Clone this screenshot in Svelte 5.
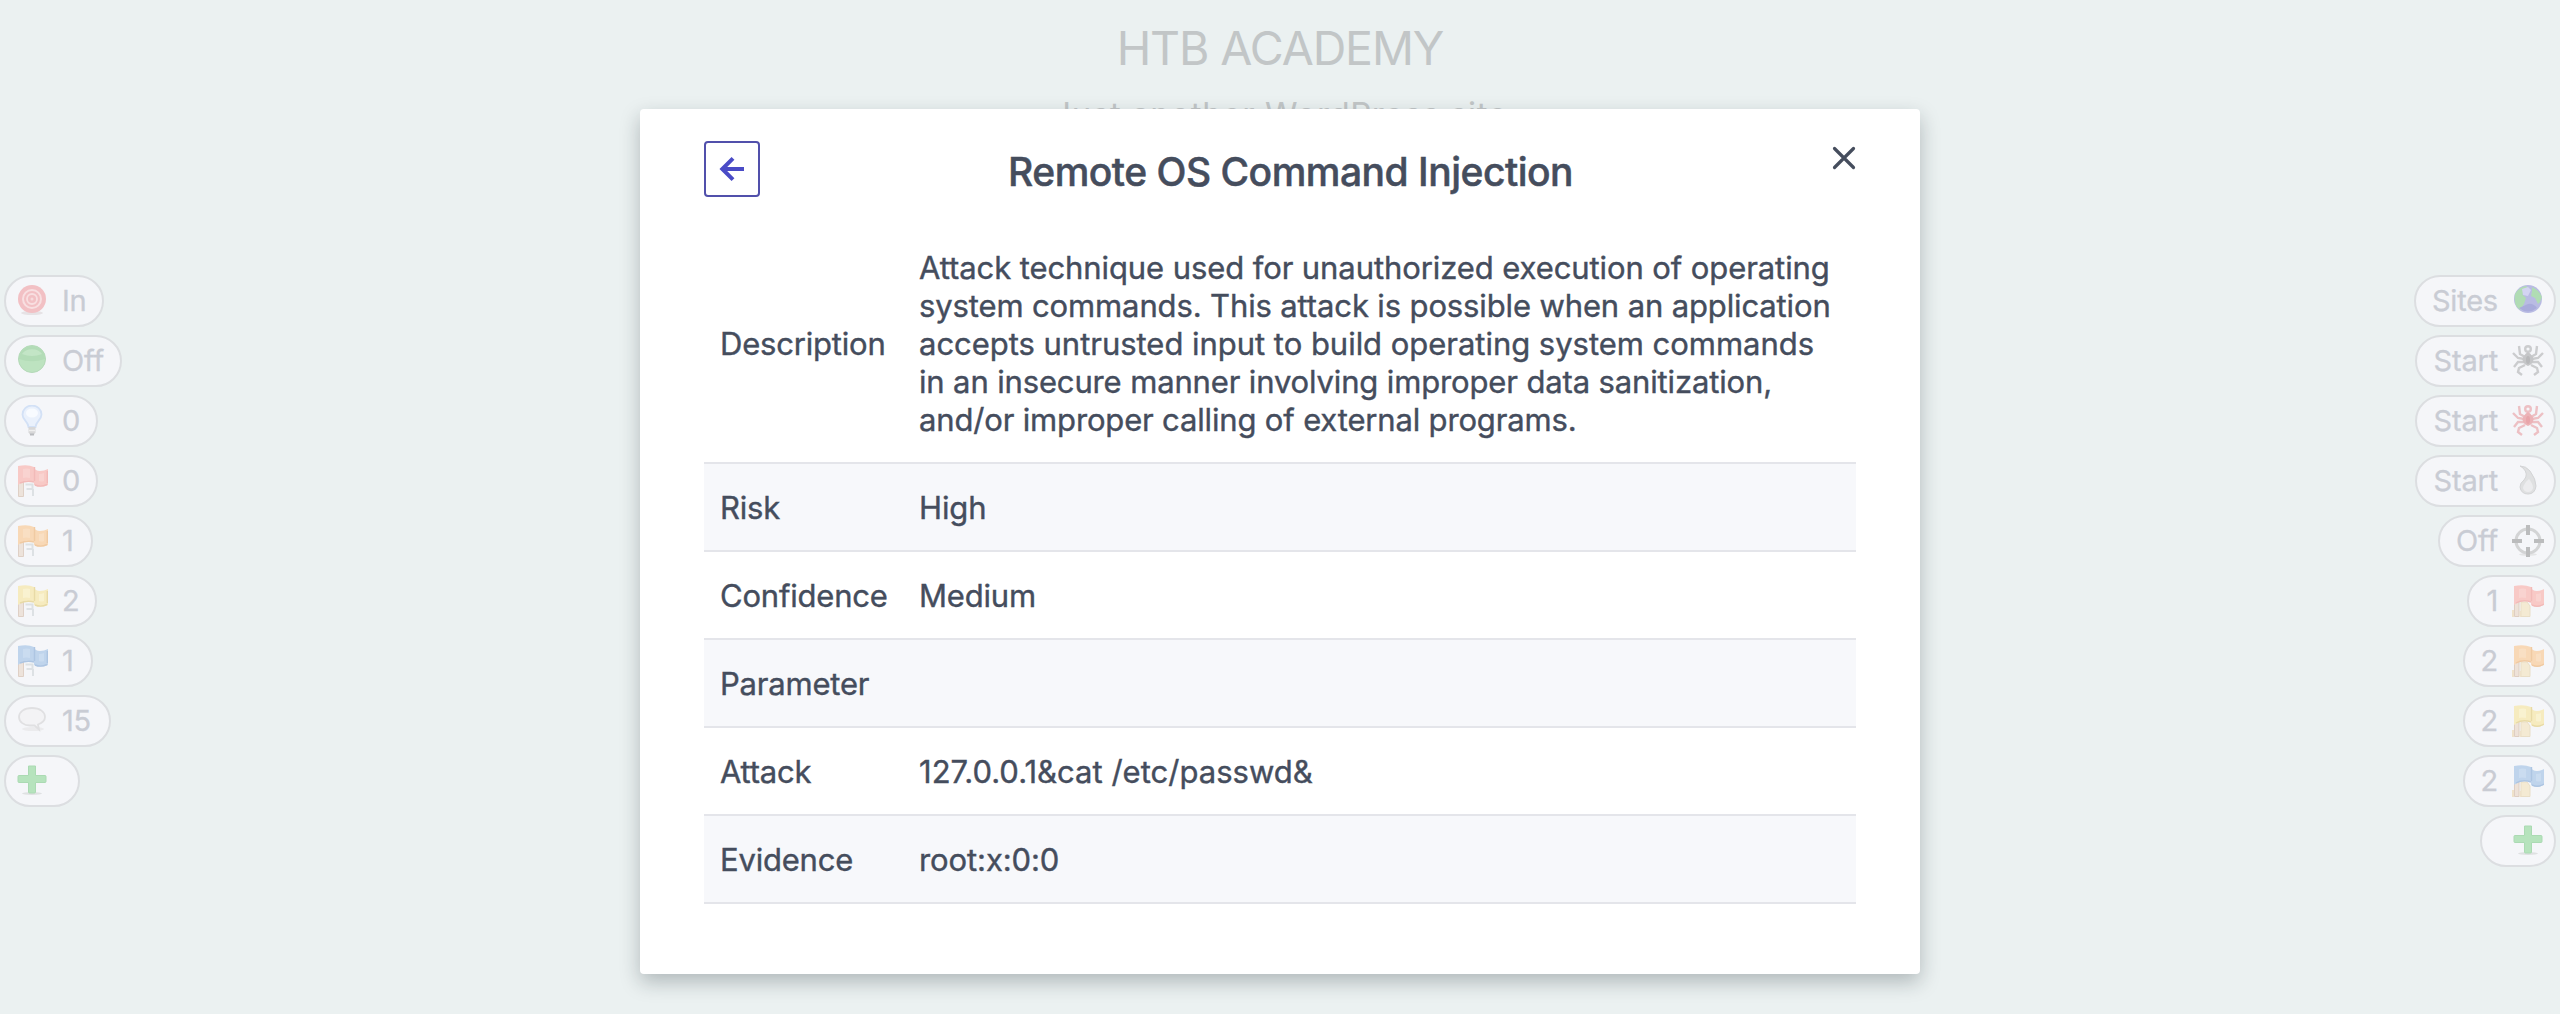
<script>
  const leftTools = [
    { icon: 'target', label: 'In', width: 100 },
    { icon: 'ball', label: 'Off', width: 118 },
    { icon: 'bulb', label: '0', width: 94 },
    { icon: 'flag', color: 'red', label: '0', width: 94 },
    { icon: 'flag', color: 'orange', label: '1', width: 89 },
    { icon: 'flag', color: 'yellow', label: '2', width: 93 },
    { icon: 'flag', color: 'blue', label: '1', width: 89 },
    { icon: 'bubble', label: '15', width: 107 },
    { icon: 'plus', label: '', width: 76 }
  ];

  const rightTools = [
    { icon: 'globe', label: 'Sites', width: 142 },
    { icon: 'spider', color: 'gray', label: 'Start', width: 141 },
    { icon: 'spider', color: 'red', label: 'Start', width: 141 },
    { icon: 'flame', label: 'Start', width: 141 },
    { icon: 'aim', label: 'Off', width: 118 },
    { icon: 'pageflag', color: 'red', label: '1', width: 89 },
    { icon: 'pageflag', color: 'orange', label: '2', width: 93 },
    { icon: 'pageflag', color: 'yellow', label: '2', width: 93 },
    { icon: 'pageflag', color: 'blue', label: '2', width: 93 },
    { icon: 'plus', label: '', width: 76 }
  ];

  // base, fold and highlight tones of each flag
  const flagFills = {
    red: ['#f8c9c6', '#f2bab8', '#f9d3d0'],
    orange: ['#f8d8b6', '#f0caa2', '#f9dfc3'],
    yellow: ['#f6ebbf', '#e8daa6', '#f9f2d0'],
    blue: ['#bfd4ec', '#adc5e2', '#cadcf0']
  };

  const rows = [
    {
      name: 'Description',
      lines: [
        ['Attack technique used for unauthorized execution of operating', -0.09],
        ['system commands. This attack is possible when an application', -0.13],
        ['accepts untrusted input to build operating system commands', -0.03],
        ['in an insecure manner involving improper data sanitization,', -0.14],
        ['and/or improper calling of external programs.', -0.16]
      ]
    },
    { name: 'Risk', lines: [['High', -0.1]] },
    { name: 'Confidence', lines: [['Medium', -0.2]] },
    { name: 'Parameter', lines: [] },
    { name: 'Attack', lines: [['127.0.0.1&cat /etc/passwd&', 0.02]] },
    { name: 'Evidence', lines: [['root:x:0:0', -0.1]] }
  ];
</script>

{#snippet icon(tool)}
  <svg class="icon" viewBox="0 0 32 32" fill="none">
    {#if tool.icon === 'target'}
      <ellipse cx="16" cy="28" rx="11" ry="2" fill="#e6e2e5" />
      <circle cx="16" cy="14" r="14" fill="#f2c0c4" />
      <circle cx="16" cy="14" r="9" stroke="#f8dfe1" stroke-width="2" />
      <circle cx="16" cy="14" r="5" stroke="#f8dfe1" stroke-width="1.800" />
      <circle cx="16" cy="14" r="1.500" fill="#f7dbdd" />
    {:else if tool.icon === 'ball'}
      <circle cx="16" cy="14" r="13.500" fill="#bde3c0" stroke="#b4d9b8" />
      <path d="M3 14a13 13 0 0 1 26 0q-13 4.500-26 0z" fill="#b3dcb7" />
      <path d="M6 9a11 8 0 0 1 20 0q-10 4-20 0z" fill="#c3e5c6" />
    {:else if tool.icon === 'bulb'}
      <path d="M12.500 22C12 16 6.500 15 6.500 9.500a9.500 9 0 0 1 19 0C25.500 15 20 16 19.500 22z" fill="#eaf1fc" stroke="#d3e1f6" stroke-width="1.800" />
      <ellipse cx="16" cy="8" rx="6" ry="4.500" fill="#f8fbff" />
      <path d="M12.500 22h7v5.500q-1 2.500-3.500 2.500t-3.500-2.500z" fill="#d8d8d9" />
      <path d="M13 25.500h6" stroke="#efefef" stroke-width="1.500" />
      <path d="M14 29.500h4" stroke="#b9bbbe" stroke-width="2" />
    {:else if tool.icon === 'flag'}
      <path d="M9.500 19.500h7v4.500h-6M17 24v7" stroke="#dde1e4" stroke-width="2" />
      <path d="M2.500 2v29.500h5V2z" fill="#ede3db" stroke="#dfd0c6" />
      <path d="M2 1q10-2 16 1 1 4 6 4 4 0 8-2v16q-8 3-14 0v-3q-8-2.500-12 0l-4 3z" fill={flagFills[tool.color][0]} />
      <path d="M18.500 2v14M19 20q6 2.500 12-0.500M31.300 6v12M4 18q7-3 14-1" stroke={flagFills[tool.color][1]} stroke-width="1.400" />
      <path d="M7 4q4-1 7 0v9q-4-1-7 0zM23 9q3 0 5-1v8q-2 1-5 0z" fill={flagFills[tool.color][2]} />
    {:else if tool.icon === 'pageflag'}
      <path d="M9 17h6l3 4v10.500H9z" fill="#f4ead3" stroke="#e9dec7" />
      <path d="M2.500 6v25.500H7V6z" fill="#eee2d8" stroke="#decec2" />
      <path d="M0 25h2v7H0zM7.500 26h1.500v6H7.500z" fill="#efe2ca" />
      <path d="M2 1q10-2 17 1 1 4 6 4 3 0 7-2v16q-7 3.500-13 0v-3q-6-3-12 0l-5 3z" fill={flagFills[tool.color][0]} />
      <path d="M19.500 2v14M20 20q6 3 12-1M4 18q7-4 15-1" stroke={flagFills[tool.color][1]} stroke-width="1.400" />
      <path d="M7 4q4-1 7 0v9q-4-1-7 0zM24 9q3 0 5-1v8q-2 1-5 0z" fill={flagFills[tool.color][2]} />
    {:else if tool.icon === 'bubble'}
      <ellipse cx="17" cy="24" rx="11" ry="2" fill="#ebebed" />
      <path d="M16 3C8 3 3 7 3 12s5 8.500 11 8.500h4.500l4.500 4-1-5c4-1.500 7-4 7-7.500C29 7 24 3 16 3z" fill="#f3f3f5" stroke="#e0e0e2" stroke-width="1.800" />
    {:else if tool.icon === 'plus'}
      <ellipse cx="16" cy="28.500" rx="10" ry="1.500" fill="#dfe1e2" />
      <path d="M12.500 1h7v9.500H29a1 1 0 0 1 1 1v5a1 1 0 0 1-1 1h-9.500V27a1 1 0 0 1-1 1h-5a1 1 0 0 1-1-1v-9.500H3a1 1 0 0 1-1-1v-5a1 1 0 0 1 1-1h9.500z" fill="#b6e3bd" stroke="#abdab3" />
    {:else if tool.icon === 'globe'}
      <circle cx="16" cy="14" r="14" fill="#b9bbe3" />
      <path d="M3 9Q7 2 14 1l4 3-4 4-4 1 4 4-2 6-4 6Q1 20 3 9zM20 2q7 3 10 10l-2 5-2 2-3-6-4-2 1-5z" fill="#b0dcb4" />
      <path d="M10 4l6-2 3 3-3 6-5-1z" fill="#d3d4f2" />
      <path d="M7 23q9 7 18 0-4-5-9-4z" fill="#a9abdb" />
    {:else if tool.icon === 'spider'}
      <g stroke={tool.color === 'red' ? '#edc0c4' : '#cbccce'} stroke-width="2.400">
        <path d="M13 12L8 9 7 1M19 12l5-3 1-8M12 14L6 13 1 8M20 14l6-1 5-5M12 17l-6 0-4 5M20 17l6 0 4 5M13 20l-6 3-1 4 4 3M19 20l6 3 1 4-4 3" />
        <circle cx="16" cy="4" r="2.800" />
      </g>
      <path d="M16 7q4.500 3 5.500 7 0 5-5.500 7-5.500-2-5.500-7 1-4 5.500-7z" fill={tool.color === 'red' ? '#ecb3b7' : '#c5c6c8'} />
      <ellipse cx="16" cy="15" rx="2" ry="4" fill={tool.color === 'red' ? '#e8a5aa' : '#b7b8ba'} />
    {:else if tool.icon === 'flame'}
      <path d="M8 1q6 0 10 5 6 8 6 15-1 8-8 8t-8-7q0-4 4-7 5-6-1-12z" fill="#dfe0e1" stroke="#d3d4d6" />
      <path d="M17 14q4 5 4 9-1 4-5 4t-5-4q1-5 6-9z" fill="#ececee" />
    {:else if tool.icon === 'aim'}
      <ellipse cx="16" cy="29.500" rx="9" ry="1.500" fill="#e4e5e6" />
      <circle cx="16" cy="16" r="12" stroke="#d3d4d5" stroke-width="3" />
      <path d="M16 0v10M16 22v10M0 16h10M22 16h10" stroke="#bbbcbd" stroke-width="4" />
    {/if}
  </svg>
{/snippet}

<div class="page">
  <aside class="tools">
    {#each leftTools as tool}
      <div class="pill" style:width="{tool.width}px">
        {@render icon(tool)}
        <span>{tool.label}</span>
      </div>
    {/each}
  </aside>

  <header class="site">
    <h1>HTB ACADEMY</h1>
    <p>Just another WordPress site</p>
  </header>

  <aside class="tools right">
    {#each rightTools as tool}
      <div class="pill" style:width="{tool.width}px">
        <span>{tool.label}</span>
        {@render icon(tool)}
      </div>
    {/each}
  </aside>

  <div class="overlay">
    <section class="modal">
      <div class="modal-head">
        <button class="back" aria-label="Back">
          <svg viewBox="0 0 52 52" fill="none">
            <path d="M38 26H18M27 15.300L16.300 26 27 36.700" />
          </svg>
        </button>
        <h2>Remote OS Command Injection</h2>
        <button class="close" aria-label="Close">
          <svg viewBox="0 0 24 24" fill="none">
            <path d="M2.500 2.500l19 19M21.500 2.500l-19 19" />
          </svg>
        </button>
      </div>
      <div class="table">
        {#each rows as row}
          <div class="row">
            <div class="name">{row.name}</div>
            <div class="value">
              {#each row.lines as [text, tracking]}
                <div style:letter-spacing="{tracking}px">{text}</div>
              {/each}
            </div>
          </div>
        {/each}
      </div>
    </section>
  </div>
</div>

<style>
  :global(body) {
    margin: 0;
    background: #ebf1f1;
  }
  .page {
    position: relative;
    display: flex;
    justify-content: space-between;
    height: 1014px;
    overflow: hidden;
    font-family: Inter, "Liberation Sans", sans-serif;
    background: #ebf1f1;
  }
  .tools {
    display: flex;
    flex-direction: column;
    gap: 8px;
    width: 200px;
    padding: 275px 4px 0;
    box-sizing: border-box;
  }
  .right {
    align-items: flex-end;
  }
  .pill {
    display: flex;
    align-items: center;
    gap: 14px;
    height: 52px;
    padding-left: 10px;
    box-sizing: border-box;
    border: 2px solid #dcdee1;
    border-radius: 26px;
    background: #f5f6f9;
    color: #c9ccd4;
    font-size: 29px;
    line-height: 36px;
    letter-spacing: -0.2px;
    -webkit-text-stroke: 0.3px #c9ccd4;
  }
  .right .pill {
    justify-content: flex-end;
    padding: 0 10px 0 0;
  }
  .icon {
    width: 32px;
    height: 32px;
    flex: none;
  }
  .site {
    text-align: center;
    color: #c2c6c7;
  }
  h1 {
    margin: 20px 0 0;
    font-size: 46.5px;
    font-weight: 400;
    line-height: 56px;
    letter-spacing: -1.1px;
  }
  .site p {
    margin: 17px 0 0;
    font-size: 33px;
    line-height: 42px;
    letter-spacing: 0.6px;
  }
  .overlay {
    position: absolute;
    inset: 0;
    display: flex;
    justify-content: center;
    align-items: flex-start;
    padding-top: 109px;
  }
  .modal {
    width: 1280px;
    height: 865px;
    padding: 32px 64px 0;
    box-sizing: border-box;
    border-radius: 4px;
    background: #fff;
    color: #454d5d;
    box-shadow: 0 8px 20px rgba(20, 35, 40, 0.27);
  }
  .modal-head {
    display: grid;
    grid-template-columns: 56px 1fr 24px;
    height: 56px;
    margin-bottom: 27px;
  }
  button {
    display: block;
    padding: 0;
    border: 0;
    background: none;
  }
  button svg {
    display: block;
  }
  .back {
    width: 56px;
    height: 56px;
    border: 2px solid #5150ab;
    border-radius: 4px;
  }
  .back svg {
    width: 52px;
    height: 52px;
    stroke: #4a4bc6;
    stroke-width: 4;
  }
  .close {
    width: 24px;
    height: 24px;
    margin-top: 4.5px;
  }
  .close svg {
    width: 24px;
    height: 24px;
    stroke: #454d5d;
    stroke-width: 3.2;
    stroke-linecap: round;
  }
  h2 {
    margin: 7px 11px 0 0;
    font-size: 39px;
    font-weight: 500;
    line-height: 48px;
    letter-spacing: -0.5px;
    text-align: center;
    white-space: nowrap;
    -webkit-text-stroke: 0.5px #454d5d;
  }
  .table {
    font-size: 31px;
    line-height: 38px;
    -webkit-text-stroke: 0.4px #454d5d;
  }
  .row {
    display: grid;
    grid-template-columns: 199px 1fr;
    align-items: center;
    min-height: 88px;
    padding: 25px 0 23px 16px;
    box-sizing: border-box;
    border-bottom: 2px solid #e4e5ea;
  }
  .row:nth-child(even) {
    background: #f7f8fb;
  }
  .name {
    letter-spacing: -0.2px;
  }
  .value {
    white-space: nowrap;
  }
</style>
